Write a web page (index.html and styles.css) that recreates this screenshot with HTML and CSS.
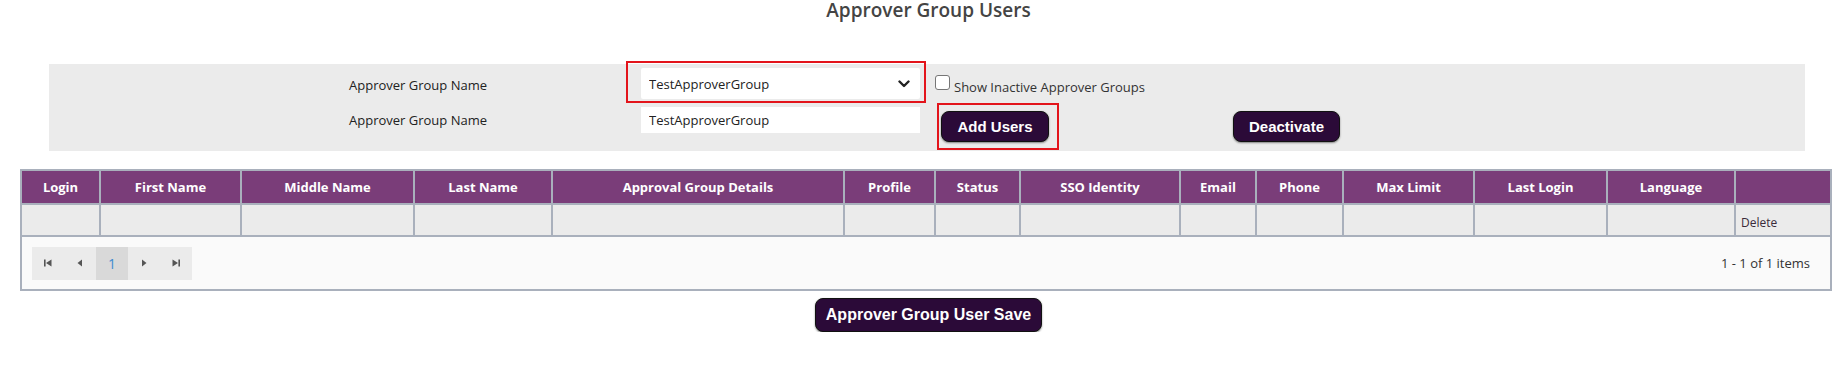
FILE: index.html
```html
<!DOCTYPE html>
<html lang="en">
<head>
  <meta charset="UTF-8" />
  <title>Approver Group Users</title>
  <link rel="stylesheet" href="styles.css">
</head>
<body>
  <div class="page">
    <h1 class="page-title">Approver Group Users</h1>

    <div class="filter-panel">
      <label class="field-label first-row">Approver Group Name</label>
      <div class="highlight select-box">
        <select class="group-select">
          <option>TestApproverGroup</option>
        </select>
        <svg class="chevron" viewBox="0 0 12 8" width="12" height="8">
          <path d="M1.5 1.5 L6 6 L10.5 1.5" fill="none" stroke="#222" stroke-width="2.4" stroke-linecap="round" stroke-linejoin="round"/>
        </svg>
      </div>
      <label class="inactive-toggle">
        <input type="checkbox" class="check" />
        <span>Show Inactive Approver Groups</span>
      </label>

      <label class="field-label second-row">Approver Group Name</label>
      <input class="text-field" type="text" value="TestApproverGroup" />
      <div class="highlight button-box">
        <button class="btn">Add Users</button>
      </div>
      <button class="btn deactivate">Deactivate</button>
    </div>

    <div class="users-grid">
      <table class="users-table">
        <colgroup>
          <col class="w-login"><col class="w-first"><col class="w-middle"><col class="w-last">
          <col class="w-details"><col class="w-profile"><col class="w-status"><col class="w-sso">
          <col class="w-email"><col class="w-phone"><col class="w-max"><col class="w-lastlogin">
          <col class="w-lang"><col class="w-action">
        </colgroup>
        <thead>
          <tr>
            <th>Login</th>
            <th>First Name</th>
            <th>Middle Name</th>
            <th>Last Name</th>
            <th>Approval Group Details</th>
            <th>Profile</th>
            <th>Status</th>
            <th>SSO Identity</th>
            <th>Email</th>
            <th>Phone</th>
            <th>Max Limit</th>
            <th>Last Login</th>
            <th>Language</th>
            <th></th>
          </tr>
        </thead>
        <tbody>
          <tr>
            <td></td><td></td><td></td><td></td><td></td><td></td><td></td>
            <td></td><td></td><td></td><td></td><td></td><td></td>
            <td class="delete-cell">Delete</td>
          </tr>
        </tbody>
      </table>

      <div class="pager">
        <div class="pager-buttons">
          <span class="pager-btn">
            <svg viewBox="0 0 10 10" width="10" height="10"><rect x="1" y="1.5" width="1.6" height="7" fill="#555"/><path d="M8.5 1.5 L3 5 L8.5 8.5 Z" fill="#555"/></svg>
          </span>
          <span class="pager-btn">
            <svg viewBox="0 0 10 10" width="10" height="10"><path d="M7 1.5 L2.5 5 L7 8.5 Z" fill="#555"/></svg>
          </span>
          <span class="pager-btn current">1</span>
          <span class="pager-btn">
            <svg viewBox="0 0 10 10" width="10" height="10"><path d="M3 1.5 L7.5 5 L3 8.5 Z" fill="#555"/></svg>
          </span>
          <span class="pager-btn">
            <svg viewBox="0 0 10 10" width="10" height="10"><path d="M1.5 1.5 L7 5 L1.5 8.5 Z" fill="#555"/><rect x="7.4" y="1.5" width="1.6" height="7" fill="#555"/></svg>
          </span>
        </div>
        <span class="pager-info">1 - 1 of 1 items</span>
      </div>
    </div>

    <div class="save-row">
      <button class="btn save">Approver Group User Save</button>
    </div>
  </div>
</body>
</html>
```

FILE: styles.css
```css
body {
  margin: 0;
  background-color: #fff;
  font-family: 'Open Sans', 'Noto Sans', sans-serif;
  color: #333;
}

.page {
  padding: 0 7px 0 20px;
}

.page-title {
  margin: 0 0 44px;
  font-size: 19px;
  font-weight: 600;
  line-height: 20px;
  text-align: center;
  color: #444;
}

/* filter panel */

.filter-panel {
  display: grid;
  grid-template-columns: 277px 311px 296px auto;
  grid-template-rows: 39px 48px;
  margin: 0 32px 0 29px;
  padding-left: 300px;
  background-color: #ebebeb;
}

.field-label {
  font-size: 13px;
  color: #222;
  line-height: 18px;
}

.field-label.first-row {
  align-self: center;
  padding-top: 3px;
}

.field-label.second-row {
  padding-top: 8px;
}

.highlight {
  border: 2px solid #e3141b;
  box-sizing: border-box;
}

.select-box {
  position: relative;
  width: 300px;
  height: 42px;
  margin-top: -3px;
  padding: 5px 4px 2px 13px;
}

.group-select {
  appearance: none;
  width: 100%;
  height: 31px;
  border: none;
  border-radius: 2px;
  background-color: #fff;
  padding: 0 8px;
  font-family: 'Open Sans', sans-serif;
  font-size: 13px;
  color: #222;
}

.chevron {
  position: absolute;
  right: 14px;
  top: 17px;
}

.inactive-toggle {
  grid-column: 3 / 5;
  display: flex;
  align-items: flex-start;
  gap: 4px;
  margin-left: -2px;
  padding-top: 11px;
  font-size: 13px;
  color: #333;
}

.inactive-toggle span {
  padding-top: 3px;
}

.check {
  appearance: none;
  width: 15px;
  height: 15px;
  margin: 0;
  border: 1px solid #767676;
  border-radius: 3px;
  background-color: #fff;
}

.text-field {
  width: 279px;
  height: 26px;
  margin: 4px 0 0 15px;
  box-sizing: border-box;
  border: none;
  background-color: #fff;
  padding: 0 8px;
  font-family: 'Open Sans', sans-serif;
  font-size: 13px;
  color: #222;
}

.button-box {
  width: 122px;
  height: 47px;
  padding: 6px 0 0 2px;
}

.btn {
  height: 31px;
  padding: 0 10px;
  border: 1px solid #111;
  border-radius: 8px;
  background-color: #2b0a38;
  box-shadow: 0 1px 2px rgba(0, 0, 0, 0.45);
  color: #fff;
  font-family: 'Liberation Sans', Arial, sans-serif;
  font-size: 15px;
  font-weight: bold;
  white-space: nowrap;
  cursor: pointer;
}

.button-box .btn {
  width: 108px;
}

.deactivate {
  width: 107px;
  margin-top: 8px;
}

/* users grid */

.users-grid {
  width: 1812px;
  margin-top: 18px;
  border: 2px solid #a9b0bc;
  box-sizing: border-box;
}

.users-table {
  width: 100%;
  border-collapse: collapse;
  table-layout: fixed;
}

.w-login { width: 78px; }
.w-first { width: 141px; }
.w-middle { width: 173px; }
.w-last { width: 138px; }
.w-details { width: 292px; }
.w-profile { width: 91px; }
.w-status { width: 85px; }
.w-sso { width: 160px; }
.w-email { width: 76px; }
.w-phone { width: 87px; }
.w-max { width: 131px; }
.w-lastlogin { width: 133px; }
.w-lang { width: 128px; }
.w-action { width: 95px; }

.users-table th {
  height: 32px;
  padding: 0;
  border: 2px solid #a9b0bc;
  border-top: none;
  background-color: #7a3d79;
  color: #fff;
  font-size: 13px;
  font-weight: 700;
  line-height: 18px;
}

.users-table td {
  height: 26px;
  padding: 0;
  border: 2px solid #a9b0bc;
  background-color: #ebebeb;
  line-height: 16px;
}

.users-table th:first-child,
.users-table td:first-child {
  border-left: none;
}

.users-table th:last-child,
.users-table td:last-child {
  border-right: none;
}

.users-table .delete-cell {
  vertical-align: bottom;
  padding: 0 0 4px 5px;
  font-size: 12px;
  color: #3a2a3a;
}

.pager {
  display: flex;
  justify-content: space-between;
  align-items: center;
  height: 52px;
  padding: 0 20px 0 10px;
  background-color: #fafafa;
}

.pager-buttons {
  display: flex;
  background-color: #ebebeb;
}

.pager-btn {
  display: flex;
  align-items: center;
  justify-content: center;
  width: 32px;
  height: 33px;
}

.pager-btn.current {
  background-color: #d9d9d9;
  color: #3d8bd0;
  font-size: 14px;
}

.pager-info {
  font-size: 13px;
  color: #333;
}

.save-row {
  display: flex;
  justify-content: center;
  margin-top: 7px;
}

.save {
  width: 227px;
  height: 34px;
  padding: 0;
  font-size: 16px;
}
```
